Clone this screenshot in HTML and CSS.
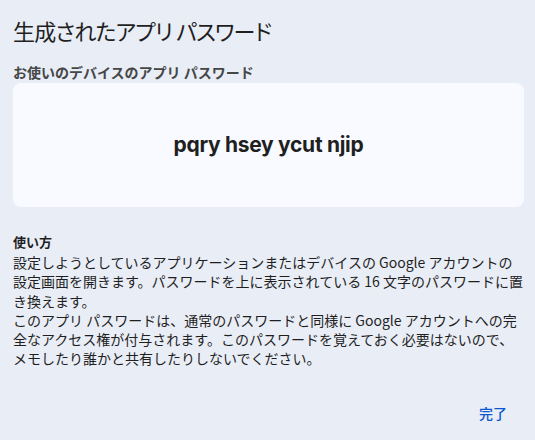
FILE: index.html
```html
<!DOCTYPE html>
<html lang="ja">
	<head>
		<meta charset="UTF-8">
		<title>生成されたアプリ パスワード</title>
		<link rel="stylesheet" href="styles.css">
	</head>
	<body>
		<div class="dialog">
			<h1 class="title">生成されたアプリ パスワード</h1>
			<div class="label">お使いのデバイスのアプリ パスワード</div>
			<div class="pw-box">
				<span class="pw">pqry hsey ycut njip</span>
			</div>
			<div class="howto">
				<div class="howto-title">使い方</div>
				<p>設定しようとしているアプリケーションまたはデバイスの Google アカウントの設定画面を開きます。パスワードを上に表示されている 16 文字のパスワードに置き換えます。</p>
				<p>このアプリ パスワードは、通常のパスワードと同様に Google アカウントへの完全なアクセス権が付与されます。このパスワードを覚えておく必要はないので、メモしたり誰かと共有したりしないでください。</p>
			</div>
			<div class="actions">
				<button class="done">完了</button>
			</div>
		</div>
	</body>
</html>
```

FILE: styles.css
```css
* {
	margin: 0;
	padding: 0;
	box-sizing: border-box;
}

body {
	background-color: #e9edf6;
	font-family: "Noto Sans CJK JP", "Noto Sans", sans-serif;
	color: #1f1f1f;
}

.dialog {
	padding: 13px 11px 0 13px;
}

/* 标题 */
.title {
	font-size: 22px;
	font-weight: 400;
	line-height: 34px;
	letter-spacing: -0.8px;
	font-feature-settings: "palt";
	color: #1f1f1f;
}

.label {
	margin-top: 15px;
	font-size: 14px;
	font-weight: 700;
	line-height: 20px;
	color: #444746;
}

/* 密码框 */
.pw-box {
	margin-top: 1px;
	height: 124px;
	background-color: #f8faff;
	border-radius: 8px;
	display: flex;
	align-items: center;
	justify-content: center;
}

.pw {
	font-family: "Inter", "Noto Sans", sans-serif;
	font-size: 21px;
	font-weight: 700;
	letter-spacing: -0.3px;
	color: #1f1f1f;
	position: relative;
	top: -1px;
}

.howto {
	margin-top: 24px;
	font-size: 14px;
	line-height: 19.3px;
	color: #1f1f1f;
}

.howto-title {
	font-weight: 700;
	font-size: 13px;
	line-height: 22px;
}

.actions {
	display: flex;
	justify-content: flex-end;
	margin-top: 34px;
}

.done {
	background: none;
	border: none;
	font-family: "Noto Sans CJK JP", sans-serif;
	font-size: 14px;
	font-weight: 500;
	color: #0b57d0;
	padding: 0 17px 0 0;
	cursor: pointer;
}
```
